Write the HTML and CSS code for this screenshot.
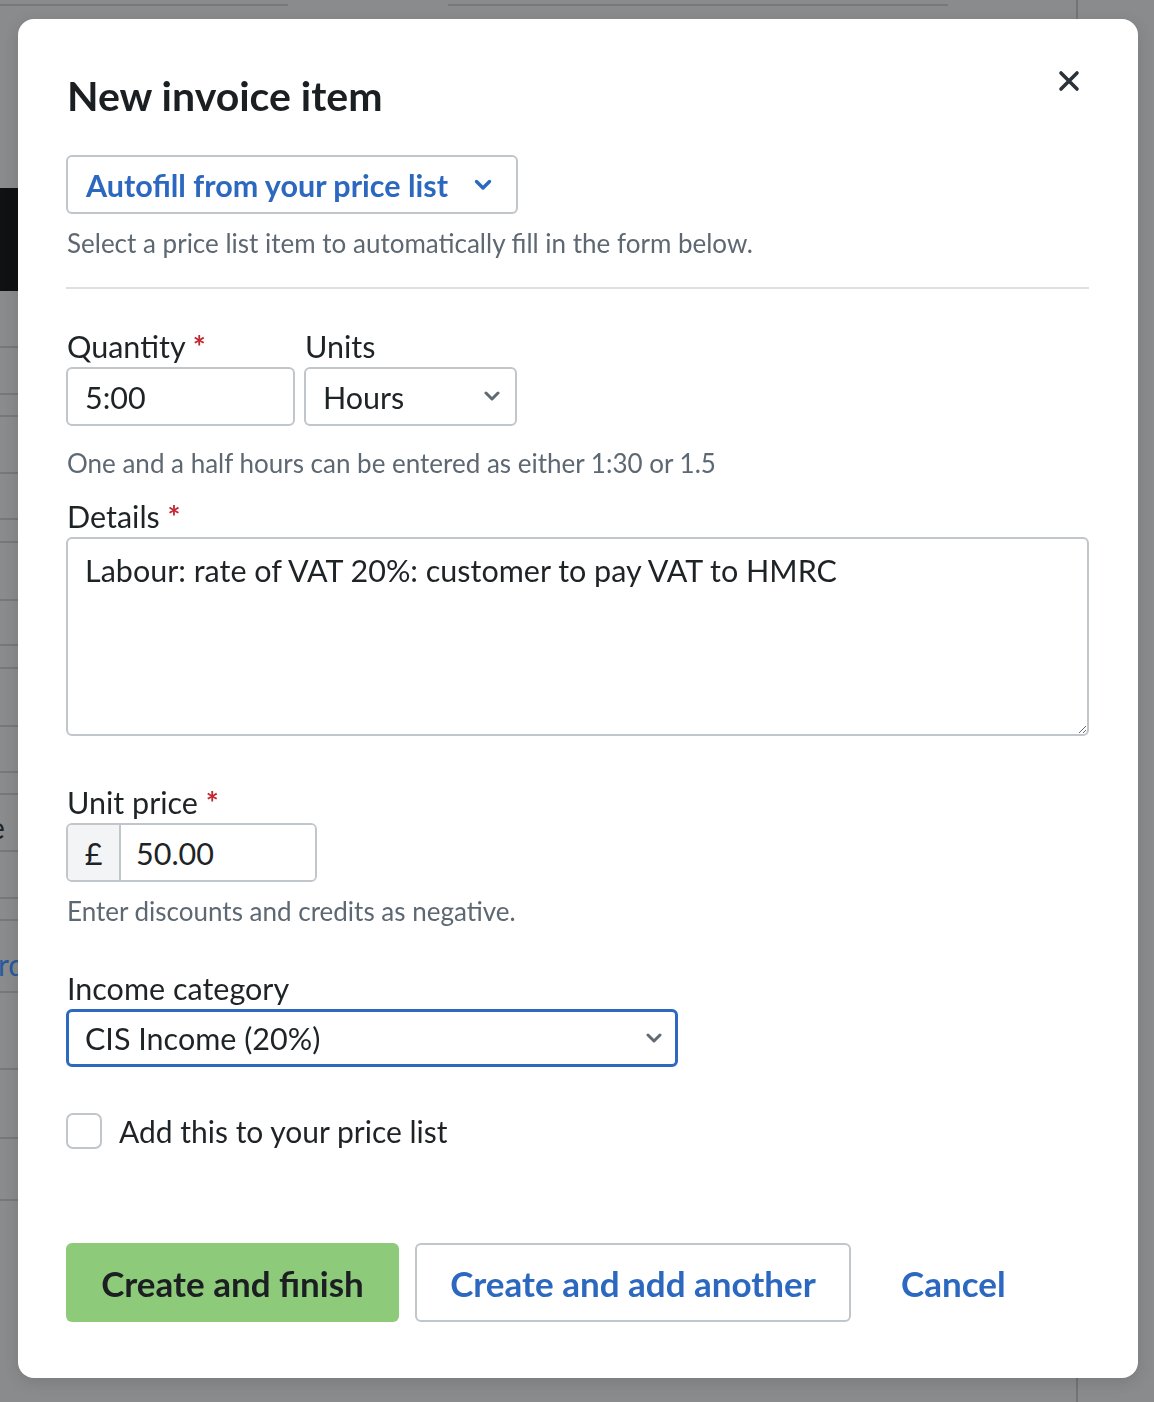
FILE: index.html
```html
<!DOCTYPE html>
<html lang="en">
<head>
    <meta charset="UTF-8">
    <meta name="viewport" content="width=device-width, initial-scale=1.0">
    <title>New invoice item</title>
    <link rel="stylesheet" href="styles.css">
</head>
<body>

    <!-- Page behind the dialog (dimmed) -->
    <div class="page">
        <div class="top-rules">
            <span class="rule rule-a"></span>
            <span class="rule rule-b"></span>
        </div>
        <div class="side">
            <div class="row"></div>
            <div class="row dark"></div>
            <div class="row line"></div>
            <div class="row line"></div>
            <div class="row line"></div>
            <div class="row line"></div>
            <div class="row line"></div>
            <div class="row line"></div>
            <div class="row line"></div>
            <div class="row line"></div>
            <div class="row line"></div>
            <div class="row line"></div>
            <div class="row line"></div>
            <div class="row line"></div>
            <div class="row line"><span class="clip-text">e</span></div>
            <div class="row line"></div>
            <div class="row line"></div>
            <div class="row line"><span class="clip-text link">rd</span></div>
            <div class="row line"></div>
            <div class="row line"></div>
            <div class="row line"></div>
        </div>
        <div class="v-rule"></div>
    </div>

    <div class="overlay">
        <div class="modal">
            <div class="modal-header">
                <h2>New invoice item</h2>
                <button class="close-btn" aria-label="Close">
                    <svg width="22" height="22" viewBox="0 0 22 22">
                        <path d="M3 3 L19 19 M19 3 L3 19" stroke="#2b3238" stroke-width="3.6" stroke-linecap="round" fill="none"/>
                    </svg>
                </button>
            </div>

            <button class="autofill-btn">
                Autofill from your price list
                <svg width="18" height="12" viewBox="0 0 18 12">
                    <path d="M2.5 2.5 L9 9 L15.5 2.5" stroke="#2c68bf" stroke-width="3.4" stroke-linecap="round" stroke-linejoin="round" fill="none"/>
                </svg>
            </button>
            <p class="hint hint-autofill">Select a price list item to automatically fill in the form below.</p>

            <hr class="divider">

            <div class="qty-row">
                <div class="field">
                    <label class="label">Quantity <span class="req">*</span></label>
                    <input type="text" class="input qty-input" value="5:00">
                </div>
                <div class="field">
                    <label class="label">Units</label>
                    <div class="select-wrap units-wrap">
                        <select class="input select">
                            <option>Hours</option>
                        </select>
                        <svg class="select-arrow" width="16" height="10" viewBox="0 0 16 10">
                            <path d="M2 2 L8 8 L14 2" stroke="#5f6a74" stroke-width="3" stroke-linecap="round" stroke-linejoin="round" fill="none"/>
                        </svg>
                    </div>
                </div>
            </div>
            <p class="hint hint-qty">One and a half hours can be entered as either 1:30 or 1.5</p>

            <label class="label label-details">Details <span class="req">*</span></label>
            <textarea class="input details">Labour: rate of VAT 20%: customer to pay VAT to HMRC</textarea>

            <label class="label label-price">Unit price <span class="req">*</span></label>
            <div class="price-group">
                <span class="prefix">£</span>
                <input type="text" class="price-input" value="50.00">
            </div>
            <p class="hint hint-price">Enter discounts and credits as negative.</p>

            <label class="label label-category">Income category</label>
            <div class="select-wrap category-wrap">
                <select class="input select category">
                    <option>CIS Income (20%)</option>
                </select>
                <svg class="select-arrow" width="16" height="10" viewBox="0 0 16 10">
                    <path d="M2 2 L8 8 L14 2" stroke="#5f6a74" stroke-width="3" stroke-linecap="round" stroke-linejoin="round" fill="none"/>
                </svg>
            </div>

            <label class="check-row">
                <input type="checkbox" class="checkbox">
                <span>Add this to your price list</span>
            </label>

            <div class="actions">
                <button class="btn btn-primary">Create and finish</button>
                <button class="btn btn-outline">Create and add another</button>
                <button class="btn btn-link">Cancel</button>
            </div>
        </div>
    </div>

</body>
</html>
```

FILE: styles.css
```css
body {
    margin: 0;
    font-family: Lato, "Liberation Sans", sans-serif;
    background-color: #898b8c;
    color: #1e2326;
    overflow: hidden;
}

/* dimmed page */
.page {
    height: 1402px;
    position: relative;
}

.top-rules {
    display: flex;
    padding-top: 4px;
}

.rule {
    height: 2px;
    background: #76787a;
}

.rule-a {
    width: 288px;
}

.rule-b {
    width: 500px;
    margin-left: 160px;
}

.side {
    width: 18px;
    display: grid;
    grid-template-rows: 182px 103px 57px 47px 22px 57px 46px 23px 58px 45px 23px 58px 46px 22px 57px 47px 22px 72px 77px 69px 62px;
    overflow: hidden;
}

.row {
    box-sizing: border-box;
    display: flex;
    align-items: center;
    overflow: hidden;
}

.row.line {
    border-bottom: 2px solid #76787a;
}

.row.dark {
    background: #0f1112;
}

.clip-text {
    flex: none;
    font-size: 30px;
    color: #1e2326;
    margin: 8px 0 0 -11px;
}

.clip-text.link {
    color: #2a5a9c;
    margin: 16px 0 0 -2px;
}

.v-rule {
    position: absolute;
    top: 0;
    bottom: 0;
    left: 1076px;
    width: 2px;
    background: #727476;
}

/* dialog */
.overlay {
    position: fixed;
    inset: 0;
    padding: 19px 0 0 18px;
}

.modal {
    box-sizing: border-box;
    width: 1120px;
    height: 1359px;
    background: #fff;
    border-radius: 16px;
    padding: 42px 49px 0 48px;
    box-shadow: 0 4px 16px rgba(0, 0, 0, 0.12);
}

.modal-header {
    display: flex;
    justify-content: space-between;
    align-items: flex-start;
}

.modal-header h2 {
    margin: 14px 0 0 1px;
    font-size: 41px;
    line-height: 42px;
    font-weight: 700;
    color: #1b1f22;
}

.close-btn {
    width: 40px;
    height: 40px;
    padding: 0;
    border: none;
    background: none;
    display: flex;
    align-items: center;
    justify-content: center;
}

.autofill-btn {
    margin-top: 38px;
    height: 59px;
    padding: 0 24px 0 18px;
    border: 2px solid #c1c6cb;
    border-radius: 6px;
    background: #fff;
    font-family: inherit;
    font-size: 30.5px;
    font-weight: 700;
    color: #2c68bf;
    display: flex;
    align-items: center;
    gap: 26px;
}

.hint {
    margin: 0 0 0 1px;
    font-size: 26px;
    line-height: 32px;
    color: #5d6872;
}

.hint-autofill {
    margin-top: 13px;
}

.divider {
    margin: 28px 0 0 0;
    border: none;
    border-top: 2px solid #dde0e3;
}

.label {
    display: block;
    font-size: 30.5px;
    line-height: 36px;
    color: #1e2326;
    margin-bottom: 3px;
    padding-left: 1px;
}

.req {
    color: #c4262e;
    font-weight: 700;
}

.qty-row {
    margin-top: 39px;
    display: flex;
    gap: 9px;
}

.input {
    box-sizing: border-box;
    height: 59px;
    border: 2px solid #c1c6cb;
    border-radius: 6px;
    background: #fff;
    font-family: inherit;
    font-size: 30.5px;
    color: #1e2326;
    padding: 0 17px;
    outline: none;
}

.qty-input {
    width: 229px;
}

.select-wrap {
    position: relative;
}

.select {
    appearance: none;
    -webkit-appearance: none;
    width: 100%;
    padding-left: 17px;
}

.units-wrap {
    width: 213px;
}

.select-arrow {
    position: absolute;
    right: 17px;
    top: 24px;
}

.hint-qty {
    margin-top: 21px;
}

.label-details {
    margin-top: 19px;
}

.details {
    display: block;
    width: 1023px;
    height: 199px;
    padding: 13px 17px;
    line-height: 36px;
    resize: vertical;
}

.label-price {
    margin-top: 48px;
}

.price-group {
    box-sizing: border-box;
    width: 251px;
    height: 59px;
    display: flex;
    border: 2px solid #c1c6cb;
    border-radius: 6px;
    overflow: hidden;
}

.prefix {
    width: 51px;
    background: #f3f4f6;
    border-right: 2px solid #c1c6cb;
    display: flex;
    align-items: center;
    justify-content: center;
    font-size: 30.5px;
}

.price-input {
    flex: 1;
    min-width: 0;
    border: none;
    outline: none;
    padding: 0 15px;
    font-family: inherit;
    font-size: 30.5px;
    color: #1e2326;
}

.hint-price {
    margin-top: 13px;
}

.label-category {
    margin-top: 43px;
}

.category-wrap {
    width: 612px;
}

.category {
    height: 58px;
    border: 3px solid #2d69c0;
    padding-left: 16px;
}

.category-wrap .select-arrow {
    right: 16px;
}

.check-row {
    margin-top: 46px;
    display: flex;
    align-items: center;
    gap: 17px;
    font-size: 30px;
    color: #1e2326;
}

.checkbox {
    appearance: none;
    -webkit-appearance: none;
    margin: 0;
    width: 36px;
    height: 36px;
    border: 2px solid #c1c6cb;
    border-radius: 7px;
    background: #fff;
}

.actions {
    margin-top: 94px;
    display: flex;
    align-items: center;
    gap: 16px;
}

.btn {
    box-sizing: border-box;
    height: 79px;
    border-radius: 6px;
    font-family: inherit;
    font-size: 35px;
    font-weight: 700;
    padding: 0 34px;
    white-space: nowrap;
    cursor: pointer;
}

.btn-primary {
    width: 333px;
    background: #8dcb7b;
    border: none;
    color: #1b1f22;
}

.btn-outline {
    width: 436px;
    padding: 0 10px;
    background: #fff;
    border: 2px solid #c1c6cb;
    color: #2c68bf;
}

.btn-link {
    background: none;
    border: none;
    color: #2c68bf;
}
```
